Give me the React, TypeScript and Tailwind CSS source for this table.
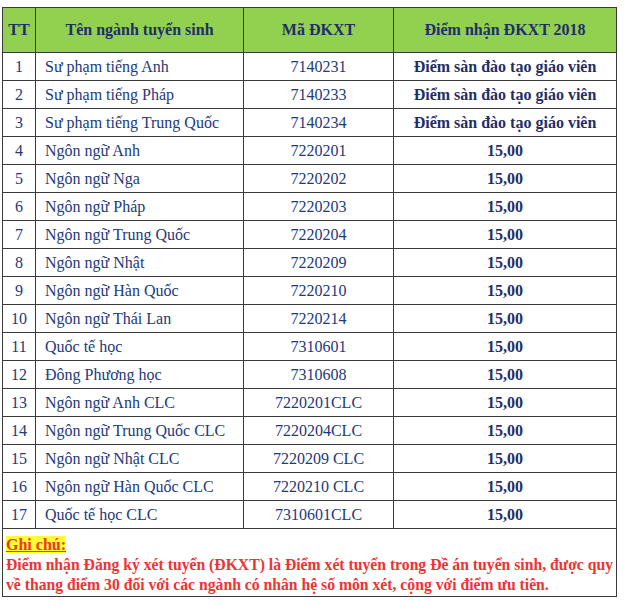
const rows: [string, string, string][] = [
  ["Sư phạm tiếng Anh", "7140231", "Điểm sàn đào tạo giáo viên"],
  ["Sư phạm tiếng Pháp", "7140233", "Điểm sàn đào tạo giáo viên"],
  ["Sư phạm tiếng Trung Quốc", "7140234", "Điểm sàn đào tạo giáo viên"],
  ["Ngôn ngữ Anh", "7220201", "15,00"],
  ["Ngôn ngữ Nga", "7220202", "15,00"],
  ["Ngôn ngữ Pháp", "7220203", "15,00"],
  ["Ngôn ngữ Trung Quốc", "7220204", "15,00"],
  ["Ngôn ngữ Nhật", "7220209", "15,00"],
  ["Ngôn ngữ Hàn Quốc", "7220210", "15,00"],
  ["Ngôn ngữ Thái Lan", "7220214", "15,00"],
  ["Quốc tế học", "7310601", "15,00"],
  ["Đông Phương học", "7310608", "15,00"],
  ["Ngôn ngữ Anh CLC", "7220201CLC", "15,00"],
  ["Ngôn ngữ Trung Quốc CLC", "7220204CLC", "15,00"],
  ["Ngôn ngữ Nhật CLC", "7220209 CLC", "15,00"],
  ["Ngôn ngữ Hàn Quốc CLC", "7220210 CLC", "15,00"],
  ["Quốc tế học CLC", "7310601CLC", "15,00"],
];

export default function App() {
  return (
    <div className="w-[640px] h-[616px] bg-white pt-[7px] pl-[2px] [font-family:Liberation_Serif,serif]">
      <table className="w-[614px] border-collapse table-fixed text-[16px] [font-family:Liberation_Serif,serif]">
        <colgroup>
          <col className="w-[33px]" />
          <col className="w-[208px]" />
          <col className="w-[150px]" />
          <col className="w-[223px]" />
        </colgroup>
        <thead>
          <tr className="h-[45px] bg-[#92d050] text-[#1f2f66] font-bold">
            <th className="border border-[#3a3a3a] text-center">TT</th>
            <th className="border border-[#3a3a3a] text-center">Tên ngành tuyển sinh</th>
            <th className="border border-[#3a3a3a] text-center">Mã ĐKXT</th>
            <th className="border border-[#3a3a3a] text-center">Điểm nhận ĐKXT 2018</th>
          </tr>
        </thead>
        <tbody>
          {rows.map((r, i) => (
            <tr key={i} className="h-[28px] text-[#23397a] leading-[20px]">
              <td className="border border-[#3a3a3a] text-center p-0">{i + 1}</td>
              <td className="border border-[#3a3a3a] pl-[9px] p-0 whitespace-nowrap">{r[0]}</td>
              <td className="border border-[#3a3a3a] text-center p-0">{r[1]}</td>
              <td className="border border-[#3a3a3a] text-center p-0 font-bold text-[#1f2f66]">{r[2]}</td>
            </tr>
          ))}
          <tr className="h-[68px]">
            <td colSpan={4} className="border border-[#3a3a3a] px-[3px] pt-[6px] pb-[1px] align-top">
              <div className="leading-[20px] text-[16px] font-bold text-[#ee3333]">
                <span className="bg-[#ffff33] underline">Ghi chú:</span>
              </div>
              <div className="leading-[20px] text-[15.7px] font-bold text-[#ee3333] whitespace-nowrap">
                Điểm nhận Đăng ký xét tuyển (ĐKXT) là Điểm xét tuyển trong Đề án tuyển sinh, được quy
                <br />
                về thang điểm 30 đối với các ngành có nhân hệ số môn xét, cộng với điểm ưu tiên.
              </div>
            </td>
          </tr>
        </tbody>
      </table>
    </div>
  );
}
